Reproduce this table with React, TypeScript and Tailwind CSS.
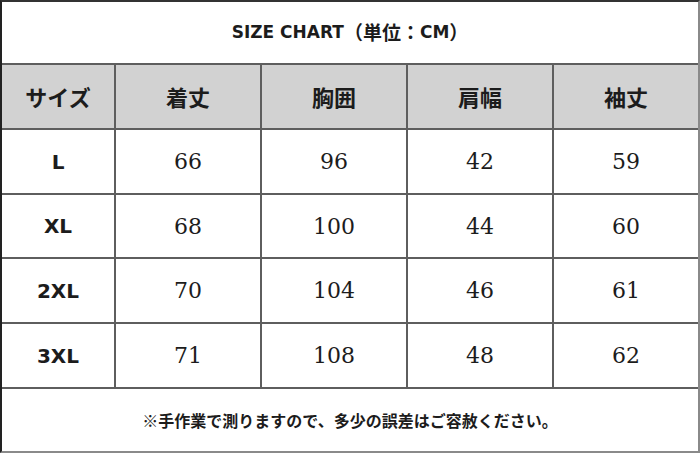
import React from "react";

const headers = ["サイズ", "着丈", "胸囲", "肩幅", "袖丈"];
const rows: { label: string; vals: string[]; h: string }[] = [
  { label: "L", vals: ["66", "96", "42", "59"], h: "h-[63px]" },
  { label: "XL", vals: ["68", "100", "44", "60"], h: "h-[62px]" },
  { label: "2XL", vals: ["70", "104", "46", "61"], h: "h-[63px]" },
  { label: "3XL", vals: ["71", "108", "48", "62"], h: "h-[63px]" },
];

const cols = "grid grid-cols-[112px_144px_144px_144px_1fr] gap-x-[2px]";

export default function App() {
  return (
    <div className="w-[700px] h-[453px] bg-white">
      <div className="w-full h-full flex flex-col gap-[2px] bg-[#5e5e5e] border-2 border-l-[#222] border-t-[#333] border-r-[#8a8a8a] border-b-[#8a8a8a] text-[#1c1c1c]">
        <div className="h-[61px] shrink-0 bg-white flex items-center justify-center font-bold">
          <span className="text-[17px] font-['DejaVu_Sans',sans-serif]">SIZE CHART</span>
          <span className="text-[19px] font-['Noto_Sans_CJK_JP',sans-serif]">（単位：</span>
          <span className="text-[17px] font-['DejaVu_Sans',sans-serif]">CM</span>
          <span className="text-[19px] font-['Noto_Sans_CJK_JP',sans-serif]">）</span>
        </div>
        <div className={`${cols} h-[63px] shrink-0`}>
          {headers.map((h) => (
            <div
              key={h}
              className="bg-[#d2d2d2] flex items-center justify-center text-[22px] font-bold font-['Noto_Sans_CJK_JP',sans-serif]"
            >
              {h}
            </div>
          ))}
        </div>
        {rows.map((r) => (
          <div key={r.label} className={`${cols} ${r.h} shrink-0`}>
            <div className="bg-white flex items-center justify-center text-[20px] font-bold font-['DejaVu_Sans',sans-serif]">
              {r.label}
            </div>
            {r.vals.map((v, i) => (
              <div
                key={i}
                className="bg-white flex items-center justify-center text-[22px] font-['DejaVu_Serif',serif]"
              >
                {v}
              </div>
            ))}
          </div>
        ))}
        <div className="h-[62px] shrink-0 bg-white flex items-center justify-center text-[16px] font-bold font-['Noto_Sans_CJK_JP',sans-serif]">
          ※手作業で測りますので、多少の誤差はご容赦ください。
        </div>
      </div>
    </div>
  );
}
